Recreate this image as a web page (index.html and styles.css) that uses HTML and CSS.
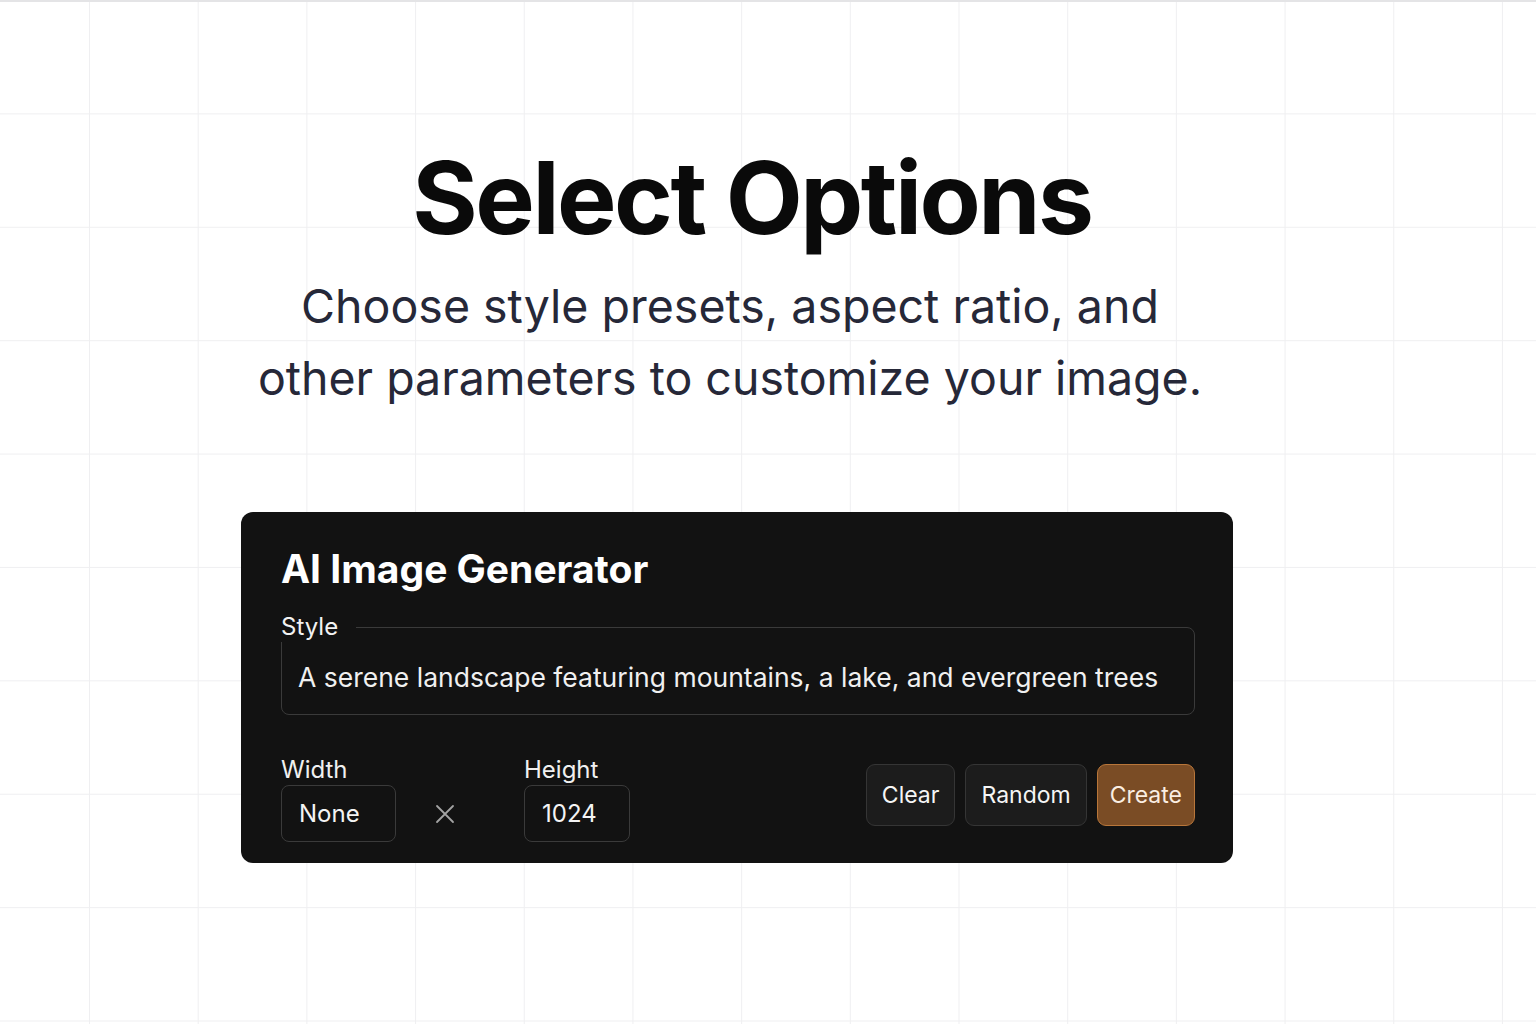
FILE: index.html
```html
<!DOCTYPE html>
<html lang="en">
<head>
<meta charset="utf-8">
<title>Select Options</title>
<link rel="stylesheet" href="styles.css">
</head>
<body>
<div class="page">
  <header class="hero">
    <h1 class="title">Select Options</h1>
    <p class="subtitle">Choose style presets, aspect ratio, and<br>other parameters to customize your image.</p>
  </header>
  <section class="card">
    <h2 class="card-title">AI Image Generator</h2>
    <fieldset class="style-field">
      <legend class="style-legend">Style</legend>
      <div class="style-value">A serene landscape featuring mountains, a lake, and evergreen trees</div>
    </fieldset>
    <div class="controls">
      <div class="dims">
        <div class="dim">
          <label class="dim-label">Width</label>
          <div class="dim-input dim-width">None</div>
        </div>
        <span class="times" aria-label="by">
          <svg width="20" height="20" viewBox="0 0 20 20"><path d="M2 2 L18 18 M18 2 L2 18" stroke="#a3a3a3" stroke-width="1.8" stroke-linecap="round" fill="none"/></svg>
        </span>
        <div class="dim">
          <label class="dim-label">Height</label>
          <div class="dim-input dim-height">1024</div>
        </div>
      </div>
      <div class="actions">
        <button class="btn">Clear</button>
        <button class="btn">Random</button>
        <button class="btn btn-primary">Create</button>
      </div>
    </div>
  </section>
</div>
</body>
</html>
```
FILE: styles.css
```css
* { box-sizing: border-box; }
html, body { margin: 0; padding: 0; }
body {
  width: 1536px;
  height: 1024px;
  overflow: hidden;
  font-family: Inter, "Noto Sans", sans-serif;
  background-color: #ffffff;
  background-image:
    linear-gradient(to right, #efeff1 1px, transparent 1px),
    linear-gradient(to bottom, #efeff1 1px, transparent 1px);
  background-size: 108.7px 113.4px;
  background-position: 89px 0;
  border-top: 2px solid #e4e4e6;
}
.page {
  width: 992px;
  margin-left: 241px;
  padding-top: 146px;
}
.hero { text-align: center; }
.title {
  margin: 0;
  font-size: 100px;
  font-weight: 700;
  letter-spacing: -2.5px;
  line-height: 100px;
  color: #0a0a0a;
  padding-left: 30px;
}
.subtitle {
  margin: 22px 0 0;
  font-size: 46.5px;
  line-height: 72px;
  font-weight: 400;
  color: #262838;
  padding-right: 14px;
}
.card {
  margin-top: 98px;
  background: #121212;
  border-radius: 12px;
  padding: 32px 38px 20px 40px;
  height: 351px;
}
.card-title {
  margin: 0;
  font-size: 39px;
  font-weight: 700;
  color: #ffffff;
  line-height: 50px;
}
.style-field {
  margin: 18px 0 0;
  border: 1px solid #3a3a3a;
  border-radius: 8px;
  padding: 0 16px;
  height: 103px;
}
.style-legend {
  margin-left: -17px;
  padding: 0 18px 0 0;
  font-size: 24px;
  line-height: 30px;
  color: #f2f2f2;
}
.style-value {
  font-size: 26.5px;
  line-height: 34px;
  color: #f0f0f0;
  padding-top: 18px;
}
.controls {
  display: flex;
  justify-content: space-between;
  align-items: flex-start;
  margin-top: 40px;
}
.dims {
  display: flex;
  align-items: flex-end;
}
.dim { display: flex; flex-direction: column; }
.dim-label {
  font-size: 24px;
  line-height: 30px;
  color: #f0f0f0;
}
.dim-input {
  height: 57px;
  border: 1px solid #3a3a3a;
  border-radius: 8px;
  font-size: 24px;
  color: #f4f4f4;
  display: flex;
  align-items: center;
  padding-left: 17px;
}
.dim-width { width: 115px; }
.dim-height { width: 106px; }
.times {
  width: 128px;
  height: 57px;
  display: flex;
  align-items: center;
  padding-left: 39px;
}
.times svg { display: block; }
.actions {
  display: flex;
  gap: 10px;
  margin-top: 9px;
}
.btn {
  height: 62px;
  padding: 0 15px;
  font-family: Inter, "Noto Sans", sans-serif;
  font-size: 23px;
  color: #f5f5f5;
  background: #1c1c1c;
  border: 1px solid #353535;
  border-radius: 9px;
}
.btn-primary {
  padding: 0 12px;
  background: #7a4c25;
  border-color: #b8763a;
  color: #fbeee2;
}
```
